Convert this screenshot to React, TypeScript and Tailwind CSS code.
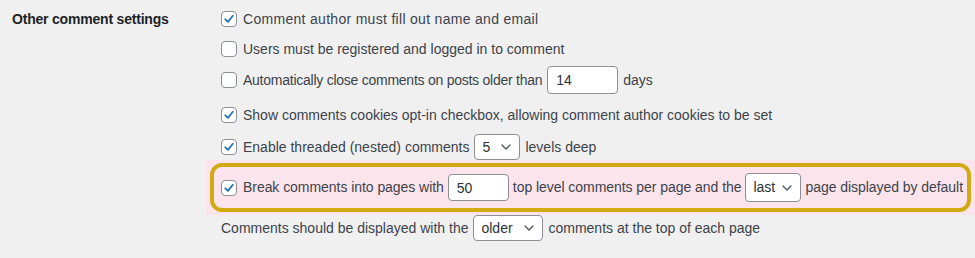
import React from 'react';

const font = { fontFamily: '"Liberation Sans", Arial, sans-serif' };

function Check({ checked }: { checked?: boolean }) {
  return (
    <span className="w-4 h-4 flex-shrink-0 rounded-[4px] border border-[#8c8f94] bg-white flex items-center justify-center mr-[1px]">
      {checked && (
        <svg width="12" height="12" viewBox="0 0 12 12" fill="none">
          <path d="M2.3 6.3 L4.9 8.9 L9.8 2.8" stroke="#2271b1" strokeWidth="1.8" strokeLinecap="round" strokeLinejoin="round" />
        </svg>
      )}
    </span>
  );
}

function TextBox({ value, w, h = 'h-[28px]' }: { value: string; w: string; h?: string }) {
  return (
    <input
      readOnly
      value={value}
      className={`${w} ${h} flex-shrink-0 px-2 rounded-[4px] border border-[#8c8f94] bg-white text-[14px] text-[#2c3338] outline-none`}
    />
  );
}

function Select({ value, w, h = 'h-[26px]' }: { value: string; w: string; h?: string }) {
  return (
    <span className={`${w} ${h} flex-shrink-0 pl-[7px] pr-[8px] rounded-[4px] border border-[#8c8f94] bg-white flex items-center justify-between text-[14px] text-[#2c3338]`}>
      <span>{value}</span>
      <svg width="10" height="6" viewBox="0 0 10 6" fill="none">
        <path d="M1 1 L5 5 L9 1" stroke="#50575e" strokeWidth="1.4" strokeLinecap="round" strokeLinejoin="round" />
      </svg>
    </span>
  );
}

export default function App() {
  return (
    <div className="w-[975px] h-[258px] bg-[#f0f0f1] text-[14px] text-[#3c434a] flex pt-[4px] whitespace-nowrap" style={font}>
      {/* Label column */}
      <div className="w-[206px] flex-shrink-0 pl-3 h-[30px] flex items-center">
        <span className="font-bold text-[#1d2327] tracking-[-0.2px]">Other comment settings</span>
      </div>

      {/* Settings column */}
      <div className="flex-1 flex flex-col min-w-0">
        <div className="h-[30px] pl-[15px] flex items-center gap-[5px]">
          <Check checked />
          <span className="tracking-[0.3px]">Comment author must fill out name and email</span>
        </div>
        <div className="h-[30px] pl-[15px] flex items-center gap-[5px]">
          <Check />
          <span>Users must be registered and logged in to comment</span>
        </div>
        <div className="h-[32px] pl-[15px] flex items-center gap-[5px]">
          <Check />
          <span className="tracking-[-0.25px]">Automatically close comments on posts older than</span>
          <TextBox value="14" w="w-[71px]" />
          <span>days</span>
        </div>
        <div className="h-[38px] pl-[15px] flex items-center gap-[5px]">
          <Check checked />
          <span>Show comments cookies opt-in checkbox, allowing comment author cookies to be set</span>
        </div>
        <div className="h-[26px] pl-[15px] flex items-center gap-[5px]">
          <Check checked />
          <span>Enable threaded (nested) comments</span>
          <Select value="5" w="w-[46px]" />
          <span>levels deep</span>
        </div>

        {/* Highlighted row */}
        <div className="bg-[#fce4ec] pt-[3px] pb-[3px] pl-[4px] pr-[4px]">
          <div className="h-[49px] border-4 border-[#d1aa12] rounded-[12px] pl-[7px] flex items-center gap-[4px] tracking-[-0.05px]">
            <Check checked />
            <span className="ml-[1px]">Break comments into pages with</span>
            <TextBox value="50" w="w-[61px]" h="h-[27px]" />
            <span>top level comments per page and the</span>
            <Select value="last" w="w-[56px]" h="h-[29px]" />
            <span>page displayed by default</span>
          </div>
        </div>

        <div className="h-[26px] pl-[15px] flex items-center gap-[5px]">
          <span>Comments should be displayed with the</span>
          <Select value="older" w="w-[70px]" />
          <span>comments at the top of each page</span>
        </div>
      </div>
    </div>
  );
}
